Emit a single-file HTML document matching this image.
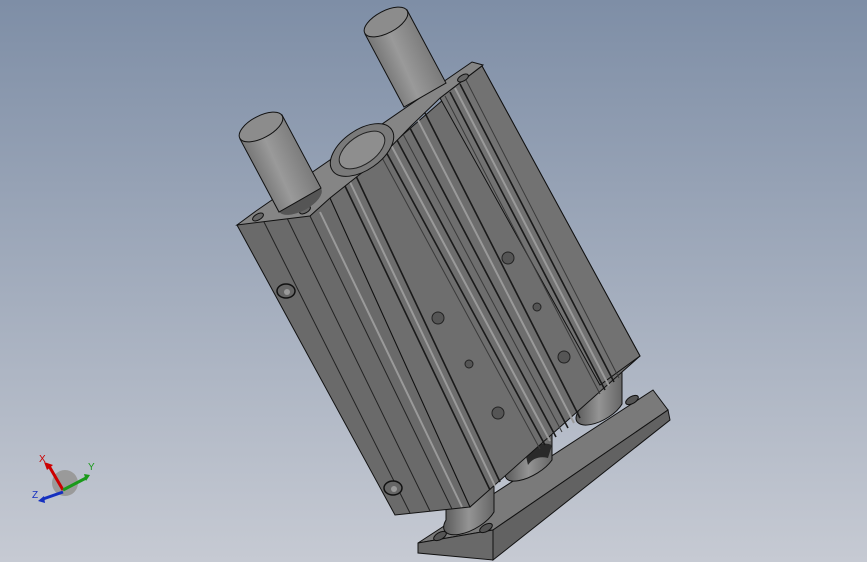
<!DOCTYPE html>
<html><head><meta charset="utf-8"><style>
html,body{margin:0;padding:0;width:867px;height:562px;overflow:hidden}
svg{display:block}
</style></head><body>
<svg width="867" height="562" viewBox="0 0 867 562" xmlns="http://www.w3.org/2000/svg">
<defs>
<linearGradient id="bg" x1="0" y1="0" x2="0" y2="1">
<stop offset="0" stop-color="#7e8ea6"/><stop offset="1" stop-color="#c6cad3"/>
</linearGradient>
<linearGradient id="rod" x1="0" y1="0" x2="1" y2="0" gradientTransform="rotate(-28 .5 .5)">
<stop offset="0" stop-color="#5e5e5e"/><stop offset=".45" stop-color="#9a9a9a"/><stop offset="1" stop-color="#6a6a6a"/>
</linearGradient>
<linearGradient id="lrod" x1="0" y1="0" x2="1" y2="0">
<stop offset="0" stop-color="#5a5a5a"/><stop offset=".5" stop-color="#949494"/><stop offset="1" stop-color="#666"/>
</linearGradient>
</defs>
<rect width="867" height="562" fill="url(#bg)"/>

<!-- base plate -->
<polygon points="418,543 653,390 668,410 493,530" fill="#7a7a7a" stroke="#111" stroke-width="1"/>
<polygon points="418,543 493,530 493,560 418,553" fill="#696969" stroke="#111" stroke-width="1"/>
<polygon points="493,530 668,410 670,420 493,560" fill="#626262" stroke="#111" stroke-width="1"/>
<ellipse cx="440" cy="536" rx="7" ry="3.5" transform="rotate(-30 440 536)" fill="#555" stroke="#111"/>
<ellipse cx="486" cy="528" rx="7" ry="3.5" transform="rotate(-30 486 528)" fill="#555" stroke="#111"/>
<ellipse cx="632" cy="400" rx="7" ry="3.5" transform="rotate(-30 632 400)" fill="#555" stroke="#111"/>

<!-- lower rods / bosses -->
<path d="M446,486 L446,520 A26,12 -30 0 0 494,512 L494,480 Z" fill="url(#lrod)" stroke="#111"/>
<path d="M578,380 L578,412 A24,11 -30 0 0 622,404 L622,372 Z" fill="url(#lrod)" stroke="#111"/>
<path d="M508,440 L508,468 A24,10 -30 0 0 552,460 L552,432 Z" fill="url(#lrod)" stroke="#111"/>
<path d="M525,452 Q540,440 552,445 L548,458 Q535,455 528,465 Z" fill="#2a2a2a"/>

<!-- body faces -->
<polygon points="237,225 330,198 470,507 395,515" fill="#6a6a6a" stroke="#111" stroke-width="1"/>
<polygon points="330,198 482,66 640,356 470,507" fill="#6e6e6e" stroke="#111" stroke-width="1"/>
<polygon points="440,98 482,66 640,356 600,385" fill="#727272" stroke="#111" stroke-width="1"/>

<!-- left face lines -->
<g stroke="#222" stroke-width="1">
<line x1="263" y1="220" x2="410" y2="513"/>
<line x1="287" y1="218" x2="430" y2="511"/>
<line x1="310" y1="216" x2="452" y2="509"/>
</g>
<!-- groove lines on front face -->
<g stroke="#1a1a1a" stroke-width="1.6">
<line x1="345" y1="186" x2="490" y2="490"/>
<line x1="356" y1="176" x2="500" y2="482"/>
<line x1="385" y1="150" x2="545" y2="445"/>
<line x1="397" y1="140" x2="556" y2="437"/>
<line x1="410" y1="128" x2="568" y2="428"/>
<line x1="425" y1="113" x2="580" y2="418"/>
<line x1="450" y1="92" x2="605" y2="390"/>
<line x1="460" y1="84" x2="614" y2="382"/>
</g>
<g stroke="#3a3a3a" stroke-width="1">
<line x1="380" y1="154" x2="540" y2="449"/>
<line x1="403" y1="134" x2="562" y2="432"/>
<line x1="445" y1="96" x2="600" y2="394"/>
<line x1="466" y1="80" x2="619" y2="378"/>
</g>
<g stroke="#9a9a9a" stroke-width="2">
<line x1="350" y1="182" x2="495" y2="486"/>
<line x1="391" y1="145" x2="550" y2="441"/>
<line x1="418" y1="120" x2="574" y2="423"/>
<line x1="455" y1="88" x2="609" y2="386"/>
<line x1="320" y1="212" x2="462" y2="507"/>
</g>

<!-- holes -->
<g fill="#555" stroke="#222" stroke-width="1">
<circle cx="438" cy="318" r="6"/><circle cx="469" cy="364" r="4"/><circle cx="498" cy="413" r="6"/>
<circle cx="508" cy="258" r="6"/><circle cx="537" cy="307" r="4"/><circle cx="564" cy="357" r="6"/>
</g>
<g fill="#666" stroke="#111" stroke-width="1.5">
<ellipse cx="286" cy="291" rx="9" ry="7"/><ellipse cx="393" cy="488" rx="9" ry="7"/>
</g>
<circle cx="287" cy="292" r="3" fill="#999"/><circle cx="394" cy="489" r="3" fill="#999"/>

<!-- top face -->
<polygon points="237,225 256,211 472,62 483,65 440,98 410,127 378,160 330,198 310,216" fill="#858585" stroke="#111" stroke-width="1"/>
<ellipse cx="362" cy="150" rx="36" ry="20" transform="rotate(-35 362 150)" fill="#7a7a7a" stroke="#111"/>
<ellipse cx="362" cy="150" rx="26" ry="14" transform="rotate(-35 362 150)" fill="#8e8e8e" stroke="#222"/>
<ellipse cx="258" cy="217" rx="6" ry="3" transform="rotate(-30 258 217)" fill="#666" stroke="#111"/>
<ellipse cx="305" cy="210" rx="6" ry="3" transform="rotate(-30 305 210)" fill="#666" stroke="#111"/>
<ellipse cx="463" cy="78" rx="6" ry="3" transform="rotate(-30 463 78)" fill="#666" stroke="#111"/>

<!-- upper rods -->
<ellipse cx="300" cy="200" rx="24" ry="11" transform="rotate(-28 300 200)" fill="#555"/>
<polygon points="282,115 240,139 279,212 321,188" fill="url(#rod)" stroke="#111"/>
<ellipse cx="261" cy="127" rx="24" ry="11" transform="rotate(-28 261 127)" fill="#8c8c8c" stroke="#111"/>
<polygon points="407,10 365,34 404,107 446,83" fill="url(#rod)" stroke="#111"/>
<ellipse cx="386" cy="22" rx="24" ry="11" transform="rotate(-28 386 22)" fill="#8c8c8c" stroke="#111"/>

<!-- triad -->
<circle cx="65" cy="483" r="13" fill="#9a9a9a"/>
<line x1="63" y1="490" x2="49" y2="466" stroke="#c00" stroke-width="3"/>
<polygon points="44,462 53,465 47,470" fill="#c00"/>
<line x1="63" y1="490" x2="86" y2="478" stroke="#1a9a1a" stroke-width="3"/>
<polygon points="90,475 84,474 86,481" fill="#1a9a1a"/>
<line x1="63" y1="492" x2="43" y2="499" stroke="#1530c0" stroke-width="3"/>
<polygon points="38,501 44,496 45,503" fill="#1530c0"/>
<text x="39" y="462" font-family="Liberation Sans, sans-serif" font-size="10" fill="#c00">X</text>
<text x="88" y="470" font-family="Liberation Sans, sans-serif" font-size="10" fill="#1a9a1a">Y</text>
<text x="32" y="498" font-family="Liberation Sans, sans-serif" font-size="10" fill="#1530c0">Z</text>
</svg>
</body></html>
